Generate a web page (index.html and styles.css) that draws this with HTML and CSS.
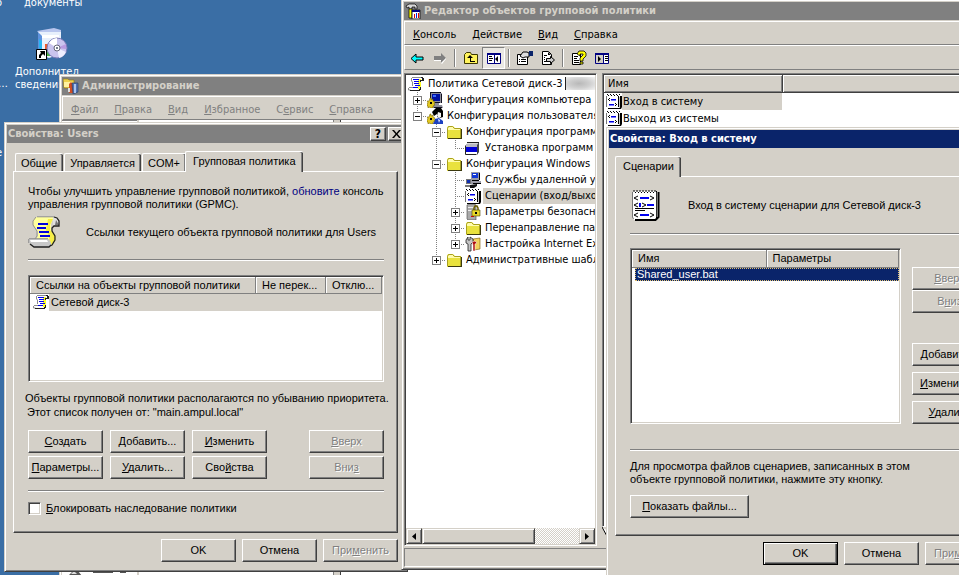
FILE: index.html
```html
<!DOCTYPE html>
<html lang="ru">
<head>
<meta charset="utf-8">
<title>Редактор объектов групповой политики</title>
<link rel="stylesheet" href="styles.css">
</head>
<body>
<svg class="defs" aria-hidden="true">
  <symbol id="i-scroll" viewBox="0 0 16 16">
    <path d="M4 1h10v3h-3l1 6-2 4H2l-1-3h3V9L3 5z" fill="#fff"/>
    <path d="M10 3h3v7l-1 3h-2V7z" fill="#ffff20"/>
    <path d="M4 1.500h9M3.500 2v3l1 1v4M1 11.500h8M.5 12v2h2" fill="none" stroke="#8c8c8c"/>
    <path d="M5 3h6v1H5zM6 5h5v1H6zM6 7h5v1H6zM7 9h5v1H7zM5 11h5v1H5z" fill="#0000f0"/>
    <path d="M13 1h2v1h1v3h-3v1h-1V4h2V2h-1zM2 14h9v-1h1v-2h1v3h-1v1H2z" fill="#202020"/>
  </symbol>
  <symbol id="i-scrollbig" viewBox="0 0 32 32">
    <path d="M8 1h18l-3 7v5l5 7v4l-4 6H8v-7l2-3v-4L5 9V4z" fill="#ffff9c"/>
    <path d="M20 3h5l-3 6v5l5 6v4l-3 4h-3v-8l-3-6 1-6z" fill="#f6ee48"/>
    <path d="M1 23h20l2 4v2l-2 2H5l-4-4z" fill="#c8c8c8"/><path d="M2 24h17l1 2H3z" fill="#fff"/>
    <path d="M25 1h4l2 3v5h-6z" fill="#e0e0e0"/><path d="M28 4l3 5h-4z" fill="#777"/>
    <path d="M9 .8h17M8 1L5 5v4l4 6v5l-2 3M.7 23v4M1 22.700h19" fill="none" stroke="#909090"/>
    <path d="M26 1l3 1 2 3v5h-5l-2 2v3l3 5v4l-3 5-2 1M2 28l4 3h15l2-2" fill="none" stroke="#202020" stroke-width="1.300"/>
    <path d="M10 7h10v2H10zM9 11h9v2H9zM11 15h10v2H11zM12 19h10v2H12z" fill="#0000e0"/>
  </symbol>
  <symbol id="i-folder" viewBox="0 0 16 16">
    <path d="M2 2h5l2 2h6v11H1V4z" fill="#e9e23e"/><path d="M2 3h5l1 2h6v1H2z" fill="#fffcae"/>
    <path d="M1.500 14V4.500l1-2h4l2 2h6V14" fill="none" stroke="#a8a020"/><path d="M2 14h13V5h1v10H2z" fill="#3c3a10"/>
  </symbol>
  <symbol id="i-script" viewBox="0 0 16 16">
    <path d="M1 2h12v12l-1 1H2l-1-1z" fill="#fff"/>
    <path d="M.5 3v11" stroke="#777"/><path d="M12 3h1v11h-1zM14 3h2v11l-1 2h-1zM2 15h12v1H2z" fill="#000"/><path d="M13 4h1v11h-1z" fill="#ccc"/>
    <path d="M1 1h1v1H1zM2 2h1v1H2zM4 1h1v1H4zM5 2h1v1H5zM7 1h1v1H7zM8 2h1v1H8zM10 1h1v1h-1zM11 2h1v1h-1zM13 1h1v1h-1zM3 5h1v1H3zM2 6h1v1H2zM3 7h1v1H3zM9 10h1v1H9zM10 11h1v1h-1zM9 12h1v1H9z" fill="#000"/>
    <path d="M5 6h5v1H5zM3 11h5v1H3z" fill="#0000e0"/><path d="M5 7h5v1H5zM3 12h5v1H3z" fill="#7a7aff"/>
  </symbol>
  <symbol id="i-scriptbig" viewBox="0 0 28 32">
    <path d="M1 2h23v27l-2 2H2l-1-2z" fill="#fff"/><path d="M.5 3v25l1 2" fill="none" stroke="#777"/>
    <path d="M26.500 3v25l-3 3H3" fill="none" stroke="#000" stroke-width="2"/><path d="M24.500 2v27" stroke="#000"/><path d="M25 3v25" stroke="#bbb" stroke-width=".5"/>
    <path d="M2 1v2M5 1v2M8 1v2M11 1v2M14 1v2M17 1v2M20 1v2M23 1v2M3.500 3v1M6.500 3v1M9.500 3v1M12.500 3v1M15.500 3v1M18.500 3v1M21.500 3v1" stroke="#000"/>
    <path d="M6 7L2 9l4 2M18 7l4 2-4 2M6 14l-4 2 4 2M10 14l4 2-4 2M6 24l-4 2 4 2M18 24l4 2-4 2M3 19.500h19M3 21.500h10" fill="none" stroke="#000"/>
    <path d="M8 9h9M15 16h7M8 26h9M8 14v4" stroke="#0000f0" stroke-width="2"/>
  </symbol>
  <symbol id="i-computer" viewBox="0 0 16 16">
    <path d="M3 0h11v1h1v10h-3v2h3l1 3H6V10H3z" fill="#8e8e9a"/><path d="M5 2h8v7H5z" fill="#0010a0"/><path d="M6 3h3v2H6z" fill="#3968ff"/>
    <path d="M3 0h11v1H4v9H3zM5 10h8v1H5zM14 2h1v9h-1zM7 15h8v1H7z" fill="#101020"/>
    <path d="M3 6h1v2l2-1v2l2 1-1 2 1 1-2 1v2H4l-1-1-2 1v-2H0v-2l1-1-1-2h2z" fill="#e2c822" stroke="#665600" stroke-width=".5"/><path d="M3 10h2v2H3z" fill="#000"/>
  </symbol>
  <symbol id="i-user" viewBox="0 0 16 16">
    <path d="M5 4l4-4h5l2 3v6l-3 1-3-1V6L7 8z" fill="#000"/><path d="M11 4l3 1v4l-2 1-2-2z" fill="#f4f4f4"/><path d="M8 11l4-1 4 3v3H6z" fill="#1a40c0"/><path d="M11 11l2 1-1 3z" fill="#fff"/>
    <path d="M3 6h1v2l2-1v2l2 1-1 2 1 1-2 1v2H4l-1-1-2 1v-2H0v-2l1-1-1-2h2z" fill="#e2c822" stroke="#665600" stroke-width=".5"/><path d="M3 10h2v2H3z" fill="#000"/>
  </symbol>
  <symbol id="i-soft" viewBox="0 0 16 16">
    <path d="M3 2h11v10l-2 2H1V5z" fill="#d8d8d8"/><path d="M1 4h11v3H1z" fill="#b8b8c0"/><path d="M1 7h11v5H1z" fill="#0000d8"/><path d="M1 12h11v2H1z" fill="#fff"/><path d="M12 5l2-3v10l-2 3z" fill="#404048"/><path d="M.5 5.500v9h11M2 2.500h12" fill="none" stroke="#222"/>
  </symbol>
  <symbol id="i-remote" viewBox="0 0 16 16">
    <path d="M6 0h9v8h-3v1h4v3H6z" fill="#9a9aa5"/><path d="M7 1h6v5H7z" fill="#1238d8"/><path d="M8 2h3v1H8z" fill="#fff"/><path d="M14 1h1v7h-1zM7 8h7v1H7zM8 11h8v1H8z" fill="#000"/>
    <path d="M1 7h5v5H1zM0 13h9v2H0z" fill="#777"/><path d="M2 8h3v3H2z" fill="#1030b0"/><path d="M5 13l7-1v2l-3 2H5z" fill="#111"/>
  </symbol>
  <symbol id="i-security" viewBox="0 0 16 16">
    <path d="M2 1l2-1h6l1 2v14H3l-1-1z" fill="#aaa" stroke="#444" stroke-width=".6"/><path d="M3 3h6v1H3zM3 6h6v1H3z" fill="#eee"/><path d="M6 12h3v1H6z" fill="#e00000"/>
    <path d="M9 7V4l1-2h2l1 2v3" fill="none" stroke="#6a5d00" stroke-width="1.500"/><path d="M7 6h8v6H7z" fill="#e8d82a" stroke="#4f4600" stroke-width=".6"/><path d="M10 8h2v2h-2z" fill="#000"/>
  </symbol>
  <symbol id="i-ie" viewBox="0 0 16 16">
    <path d="M8 3l7-1v11l-6 1z" fill="#f2d25e" stroke="#755500" stroke-width=".6"/><path d="M1 4l2-3v3h2V1l3 2v3L6 8v7H3V8L1 7z" fill="#c4c4c4" stroke="#222" stroke-width=".8"/><path d="M7 6l3-1 2 2-2 1v7H8V9z" fill="#b01010" stroke="#fff" stroke-width=".5"/>
  </symbol>
  <symbol id="i-gpedit" viewBox="0 0 16 16">
    <path d="M1 3l3-2h6l2 2v3h-2V4H7v2H4V4L2 5z" fill="#d8d8d8" stroke="#000" stroke-width=".7"/><path d="M4 6h3v9H4z" fill="#ff0" stroke="#000" stroke-width=".7"/>
    <path d="M7 7h8v9H7z" fill="#fff" stroke="#222"/><path d="M7 7h8v2H7z" fill="#000080"/><path d="M9 11h1v4H9zM13 10h1v5h-1z" fill="#e00000"/><path d="M11 10h1v5h-1z" fill="#0020e0"/>
  </symbol>
  <symbol id="i-tools" viewBox="0 0 16 16">
    <path d="M0 1h5l1 1h5v8H1z" fill="#eed34c" stroke="#8c7415" stroke-width=".6"/><path d="M1 4h8v5H1z" fill="#fff2a0"/><path d="M6 6l2-2 2 2v9H6z" fill="#d04c20"/><path d="M9 5h6v9l-5 2z" fill="#5272b0" stroke="#203a68" stroke-width=".6"/><path d="M11 6h2v9h-2z" fill="#a9c4ee"/><path d="M5 10h2v4H5z" fill="#ddd"/>
  </symbol>
  <symbol id="t-back" viewBox="0 0 16 16"><path d="M2 8.500L7 4v3h7v3H7v3z" fill="#0ff" stroke="#000"/></symbol>
  <symbol id="t-next" viewBox="0 0 16 16"><path d="M14 8L9 3v3H2v4h7v3z" fill="#808080"/><path d="M9 13l5-5v1l-4 5zM2 10h7v1H2z" fill="#fff"/></symbol>
  <symbol id="t-up" viewBox="0 0 16 16"><path d="M1.500 13.500v-9l2-2h4l1 2h6v9z" fill="#fff35c" stroke="#3c3800"/><path d="M7 5l3 3H8v3h4v1H7V8H4z" fill="#000"/></symbol>
  <symbol id="t-tree" viewBox="0 0 16 16"><path d="M1.500 3.500h13v10h-13z" fill="#fff" stroke="#000080"/><path d="M1 3h14v2H1zM8 5h1v9H8z" fill="#000080"/><path d="M3 6h3v1H3zM3 8h4v1H3zM3 10h3v1H3zM12 6v6l-3-3z" fill="#000"/></symbol>
  <symbol id="t-pane" viewBox="0 0 16 16"><path d="M1.500 3.500h13v10h-13z" fill="#fff" stroke="#000080"/><path d="M1 3h14v2H1zM9 5h1v9H9z" fill="#000080"/><path d="M2 5h7v8H2z" fill="#d4d0c8"/><path d="M11 6h3v1h-3zM11 8h3v1h-3zM11 10h3v1h-3zM4 6l3 3-3 3z" fill="#000"/></symbol>
  <symbol id="t-props" viewBox="0 0 16 16"><path d="M.5 4.500h10v10H.5z" fill="#fff" stroke="#000"/><path d="M2 9h1v1H2zM4 9h5v1H4zM2 11h1v1H2zM4 11h5v1H4z" fill="#000"/><path d="M3 6l3-4h4l2 1v4H8L6 8z" fill="#ddd" stroke="#000"/><path d="M12 1h4v5h-4z" fill="#0a246a"/></symbol>
  <symbol id="t-export" viewBox="0 0 16 16"><path d="M2.500 1.500h6l3 3v10h-9z" fill="#fff" stroke="#000"/><path d="M8 2v3h3M4 5h3v1H4zM4 7h1v1H4zM4 9h1v1H4zM4 11h5v1H4z" fill="#000"/><path d="M6.500 8.500h4v-2l4 3.500-4 3.500v-2h-4z" fill="#ccc" stroke="#000"/></symbol>
  <symbol id="t-help" viewBox="0 0 16 16"><path d="M1.500 3.500h8v11h-8z" fill="#fff" stroke="#000"/><path d="M3 6h4v1H3zM3 8h3v1H3zM3 10h5v1H3zM3 12h5v1H3z" fill="#000"/><path d="M6 4l2-3h5l2 2v3l-3 3v2H9V8l3-3V4H9v2z" fill="#ff0" stroke="#000" stroke-width=".8"/><path d="M9 12h3v2H9z" fill="#ff0" stroke="#000" stroke-width=".8"/></symbol>
</svg>

<main class="desktop">
  <div class="shortcut cut-top">документы</div>
  <span class="edge-top">о</span>
  <span class="edge-mid">…</span>
  <span class="edge-low">e</span>
  <div class="shortcut">
    <svg width="32" height="32" viewBox="0 0 32 32" aria-hidden="true">
      <path d="M1 3l17-3 7 2v5H5z" fill="#b9c6ee"/><path d="M2 4h23v22l-12 4-11-4z" fill="#e8f0fc"/><path d="M2 4l4 4v20l-4-2z" fill="#5e91dc"/><path d="M3 11l3 2v9l-3-2z" fill="#27b4f2"/><path d="M6 7h17v3H6z" fill="#fff"/><path d="M9 16h8v5H9z" fill="#ee5b2b"/><path d="M9 22h6v6H9z" fill="#4ab14a"/>
      <circle cx="21" cy="20" r="10" fill="#c9c4ee" stroke="#7b7cb8"/><path d="M21 20l-8-5a10 10 0 0 1 8-5z" fill="#fff"/><path d="M21 20l9 4a10 10 0 0 1-7 6z" fill="#eef"/><path d="M21 20l9-4v5z" fill="#b89ae0"/><circle cx="21" cy="20" r="3" fill="#fff" stroke="#667"/><circle cx="21" cy="20" r="1" fill="#456"/>
      <path d="M.5 21.500h10v10H.500z" fill="#fff" stroke="#000"/><path d="M4 23h5v5l-2-2-2 2v2H3v-3l2-2z" fill="#000"/>
    </svg>
    <span>Дополнител<br>сведения о…</span>
  </div>

  <section class="window admin" aria-label="Администрирование">
    <header class="title gray"><svg class="ico"><use href="#i-tools"/></svg>Администрирование</header>
    <nav class="menu off">
      <button><u>Ф</u>айл</button><button><u>П</u>равка</button><button><u>В</u>ид</button><button><u>И</u>збранное</button><button>С<u>е</u>рвис</button><button><u>С</u>правка</button>
    </nav>
    <div class="split"><div class="side">
      <svg width="70" height="6" viewBox="0 0 70 6" aria-hidden="true"><path d="M6 6l5-5h5l4 5zM31 1h20v2H31zM58 2h6v1h-6z" fill="#555"/><path d="M9 4l3-3 3 3z" fill="#ddd"/></svg>
    </div><div class="mid"></div><div class="main"></div></div>
  </section>

  <section class="window users" aria-label="Свойства: Users">
    <header class="title gray">Свойства: Users<span class="caps"><button aria-label="Справка">?</button><button aria-label="Закрыть"><svg width="9" height="8" viewBox="0 0 9 8"><path d="M0 0h2l2.500 3L7 0h2L5.500 4 9 8H7L4.500 5 2 8H0l3.500-4z"/></svg></button></span></header>
    <div class="body">
      <div class="tabs" role="tablist">
        <button role="tab">Общие</button><button role="tab">Управляется</button><button role="tab">COM+</button><button role="tab" class="on">Групповая политика</button>
      </div>
      <div class="page">
        <p class="intro">Чтобы улучшить управление групповой политикой, <a href="#">обновите</a> консоль управления групповой политики (GPMC).</p>
        <div class="lead"><svg width="32" height="32"><use href="#i-scrollbig"/></svg><span>Ссылки текущего объекта групповой политики для Users</span></div>
        <hr>
        <div class="list links">
          <table>
            <thead><tr><th>Ссылки на объекты групповой политики</th><th>Не перек...</th><th>Отклю...</th></tr></thead>
            <tbody><tr><td colspan="3"><div class="item"><svg class="ico"><use href="#i-scroll"/></svg><span>Сетевой диск-3</span></div></td></tr></tbody>
          </table>
        </div>
        <p class="note">Объекты групповой политики располагаются по убыванию приоритета.<br><span>Этот список получен от: "main.ampul.local"</span></p>
        <div class="grid">
          <button class="btn"><u>С</u>оздать</button><button class="btn"><u>Д</u>обавить...</button><button class="btn"><u>И</u>зменить</button><button class="btn last" disabled><u>В</u>верх</button>
          <button class="btn"><u>П</u>араметры...</button><button class="btn"><u>У</u>далить...</button><button class="btn">Сво<u>й</u>ства</button><button class="btn last" disabled>Вни<u>з</u></button>
        </div>
        <hr>
        <label class="check"><input type="checkbox"><span><u>Б</u>локировать наследование политики</span></label>
      </div>
      <footer class="actions"><button class="btn">OK</button><button class="btn">Отмена</button><button class="btn" disabled>При<u>м</u>енить</button></footer>
    </div>
  </section>

  <section class="window editor" aria-label="Редактор объектов групповой политики">
    <header class="title gray"><svg class="ico"><use href="#i-gpedit"/></svg>Редактор объектов групповой политики</header>
    <nav class="menu">
      <button><u>К</u>онсоль</button><button><u>Д</u>ействие</button><button><u>В</u>ид</button><button><u>С</u>правка</button>
    </nav>
    <div class="toolbar">
      <button aria-label="Назад"><svg class="ico"><use href="#t-back"/></svg></button><button aria-label="Вперед"><svg class="ico"><use href="#t-next"/></svg></button><i></i>
      <button aria-label="Вверх"><svg class="ico"><use href="#t-up"/></svg></button><button class="down" aria-label="Дерево"><svg class="ico"><use href="#t-tree"/></svg></button><i></i>
      <button aria-label="Свойства"><svg class="ico"><use href="#t-props"/></svg></button><button aria-label="Экспорт"><svg class="ico"><use href="#t-export"/></svg></button><i></i>
      <button aria-label="Справка"><svg class="ico"><use href="#t-help"/></svg></button><button aria-label="Панель"><svg class="ico"><use href="#t-pane"/></svg></button>
    </div>
    <div class="panes">
      <div class="tree-pane">
        <ul class="tree">
          <li><svg class="ico"><use href="#i-scroll"/></svg><span>Политика Сетевой диск-3</span><b class="smudge"></b></li>
          <li><i class="c v h"><b class="plus"></b></i><svg class="ico"><use href="#i-computer"/></svg><span>Конфигурация компьютера</span></li>
          <li><i class="c up h"><b></b></i><svg class="ico"><use href="#i-user"/></svg><span>Конфигурация пользователя</span></li>
          <li><i class="c"></i><i class="c v h"><b></b></i><svg class="ico"><use href="#i-folder"/></svg><span>Конфигурация программ</span></li>
          <li><i class="c"></i><i class="c v"></i><i class="c up h"></i><svg class="ico"><use href="#i-soft"/></svg><span>Установка программ</span></li>
          <li><i class="c"></i><i class="c v h"><b></b></i><svg class="ico"><use href="#i-folder"/></svg><span>Конфигурация Windows</span></li>
          <li><i class="c"></i><i class="c v"></i><i class="c v h"></i><svg class="ico"><use href="#i-remote"/></svg><span>Службы удаленной установки</span></li>
          <li><i class="c"></i><i class="c v"></i><i class="c v h"></i><svg class="ico"><use href="#i-script"/></svg><span class="sel">Сценарии (вход/выход из системы)</span></li>
          <li><i class="c"></i><i class="c v"></i><i class="c v h"><b class="plus"></b></i><svg class="ico"><use href="#i-security"/></svg><span>Параметры безопасности</span></li>
          <li><i class="c"></i><i class="c v"></i><i class="c v h"><b class="plus"></b></i><svg class="ico"><use href="#i-folder"/></svg><span>Перенаправление папки</span></li>
          <li><i class="c"></i><i class="c v"></i><i class="c up h"><b class="plus"></b></i><svg class="ico"><use href="#i-ie"/></svg><span>Настройка Internet Explorer</span></li>
          <li><i class="c"></i><i class="c up h"><b class="plus"></b></i><svg class="ico"><use href="#i-folder"/></svg><span>Административные шаблоны</span></li>
        </ul>
        <div class="scroll"><button aria-label="Влево"><svg width="4" height="7"><path d="M4 0v7L0 3.500z"/></svg></button><div class="thumb"></div><div class="track"></div><button aria-label="Вправо"><svg width="4" height="7"><path d="M0 0v7l4-3.500z"/></svg></button></div>
      </div>
      <div class="right-pane">
        <div class="files">
          <table>
            <thead><tr><th>Имя</th><th></th></tr></thead>
            <tbody>
              <tr><td><div class="item"><svg class="ico"><use href="#i-script"/></svg><span>Вход в систему</span></div></td><td></td></tr>
              <tr><td><div class="item plain"><svg class="ico"><use href="#i-script"/></svg><span>Выход из системы</span></div></td><td></td></tr>
            </tbody>
          </table>
        </div>
        <svg class="view-tab" width="16" height="12" viewBox="0 0 16 12" aria-hidden="true"><path d="M0 0l6 11h10" fill="#fff" stroke="#000"/></svg>
      </div>
    </div>
    <div class="status"></div>
  </section>

  <section class="window logon" aria-label="Свойства: Вход в систему">
    <header class="title">Свойства: Вход в систему</header>
    <div class="body">
      <div class="tabs" role="tablist"><button role="tab" class="on">Сценарии</button></div>
      <div class="page">
        <div class="lead"><svg width="28" height="32"><use href="#i-scriptbig"/></svg><span>Вход в систему сценарии для Сетевой диск-3</span></div>
        <hr>
        <div class="cols">
          <div class="list scripts">
            <table>
              <thead><tr><th>Имя</th><th>Параметры</th></tr></thead>
              <tbody><tr><td colspan="2"><div class="picked">Shared_user.bat</div></td></tr></tbody>
            </table>
          </div>
          <div class="stack">
            <button class="btn" disabled><u>В</u>верх</button><button class="btn" disabled>В<u>н</u>из</button>
            <button class="btn add"><u>Д</u>обавить...</button><button class="btn"><u>И</u>зменить...</button><button class="btn"><u>У</u>далить</button>
          </div>
        </div>
        <hr>
        <p class="hint">Для просмотра файлов сценариев, записанных в этом<br>объекте групповой политики, нажмите эту кнопку.</p>
        <button class="btn show"><u>П</u>оказать файлы...</button>
      </div>
      <footer class="actions"><button class="btn default">OK</button><button class="btn">Отмена</button><button class="btn" disabled>При<u>м</u>енить</button></footer>
    </div>
  </section>
</main>
</body>
</html>
```
FILE: styles.css
```css
:root {
  --face: #d4d0c8;
  --shade: #808080;
  --dark: #404040;
  --ui: "Liberation Sans", Arial, sans-serif;
  --shell: "DejaVu Sans Condensed", "DejaVu Sans", sans-serif;
}
* { box-sizing: border-box; }
body { margin: 0; color: #000; font: 11px/13px var(--ui); }
button { font: inherit; color: inherit; padding: 0; margin: 0; border: 0; background: none; white-space: nowrap; }
p, ul { margin: 0; padding: 0; list-style: none; }
table { border-collapse: collapse; table-layout: fixed; width: 100%; }
th { font-weight: normal; text-align: left; white-space: nowrap; }
td { padding: 0; white-space: nowrap; }
hr { margin: 0; border: 0; border-top: 1px solid var(--shade); border-bottom: 1px solid #fff; }
u { text-underline-offset: 1px; }
.defs { display: none; }
.ico { width: 16px; height: 16px; flex: none; }

.desktop { position: relative; height: 100vh; overflow: hidden; background: #3a6ea5; }
.shortcut { position: absolute; left: 15px; top: 28px; width: 72px; color: #fff; font: 11px/13px var(--shell); white-space: nowrap; }
.shortcut svg { display: block; margin: 0 auto 5px 21px; }
.shortcut.cut-top { left: 24px; top: -4px; }
.edge-top, .edge-mid, .edge-low { position: absolute; left: -4px; top: -4px; color: #fff; font: 11px/13px var(--shell); }
.edge-mid { left: -2px; top: 77px; }
.edge-low { top: 146px; }

.window { position: absolute; display: flex; flex-direction: column; padding: 2px; background: var(--face); border: 1px solid; border-color: var(--face) var(--dark) var(--dark) var(--face); box-shadow: inset 1px 1px #fff, inset -1px -1px var(--shade); }
.title { display: flex; align-items: center; flex: none; height: 18px; padding: 0 1px; gap: 3px; background: #0a246a; color: #fff; font: bold 11px/18px var(--shell); white-space: nowrap; }
.title.gray { background: var(--shade); color: var(--face); }
.caps { display: flex; gap: 2px; margin-left: auto; }
.caps button { display: grid; place-items: center; width: 16px; height: 14px; color: #000; font: bold 12px/12px var(--shell); background: var(--face); border: 1px solid; border-color: #fff var(--dark) var(--dark) #fff; box-shadow: inset -1px -1px var(--shade); }
.menu { display: flex; align-items: center; flex: none; height: 24px; margin-top: 1px; padding: 3px 0 0; border: 1px solid; border-color: #fff var(--shade) var(--shade) #fff; font: 11px/14px var(--shell); }
.menu button { padding: 0 8px; }
.menu.off { color: var(--shade); }

.admin { left: 59px; top: 74px; width: 580px; bottom: -40px; }
.split { display: flex; gap: 2px; flex: 1; }
.side { display: flex; align-items: flex-end; width: 75px; padding-bottom: 36px; background: #fff; border-top: 1px solid var(--shade); }
.mid { width: 195px; margin-right: 4px; background: #fff; border-right: 1px solid var(--shade); }
.main { flex: 1; background: #fff; border-left: 1px solid var(--dark); }

.users { left: 4px; top: 122px; width: 404px; }
.body { padding: 8px 7px 7px 6px; }
.tabs { display: flex; align-items: flex-end; height: 21px; padding-left: 2px; position: relative; margin-bottom: -1px; }
.tabs button { height: 18px; margin: 0 1px 1px 0; padding: 2px 6px 0 5px; border: solid #fff; border-width: 1px 0 0 1px; border-radius: 2px 2px 0 0; box-shadow: inset -1px 0 var(--dark), inset -2px 0 var(--shade); }
.tabs .on { height: 21px; margin: 0 0 0 -2px; padding: 0 7px 2px; background: var(--face); }
.page { padding: 13px 13px 17px 14px; border: 1px solid; border-color: #fff var(--dark) var(--dark) #fff; box-shadow: inset -1px -1px var(--shade); }
.intro { margin-right: -1px; }
.intro a { color: #000080; text-decoration: none; }
.lead { display: flex; align-items: center; gap: 26px; }
.users .lead { margin: 5px 0 11px; }
.list { background: #fff; border: 1px solid; border-color: var(--shade) #fff #fff var(--shade); box-shadow: inset 1px 1px var(--dark), inset -1px -1px var(--face); padding: 1px; }
.list th { height: 16px; padding: 1px 6px 0; background: var(--face); border-right: 1px solid var(--shade); border-bottom: 1px solid var(--shade); box-shadow: inset 1px 1px #fff; }
.links { height: 107px; margin: 14px 0 9px; }
.links th:nth-child(2) { width: 70px; }
.links th:nth-child(3) { width: 56px; }
.item { display: flex; height: 17px; line-height: 17px; }
.item span { flex: 1; padding-left: 2px; background: var(--face); }
.item.plain span { background: none; }
.links .item { padding-left: 3px; }
.note { margin: 0 -8px 11px -3px; line-height: 14px; white-space: nowrap; }
.note span { padding-left: 2px; }
.grid { display: grid; grid-template-columns: repeat(4, 75px); gap: 3px 7px; margin-bottom: 11px; }
.grid .last { margin-left: 35px; }
.btn { display: block; width: 75px; height: 23px; text-align: center; border: 1px solid; border-color: #fff var(--dark) var(--dark) #fff; box-shadow: inset -1px -1px var(--shade); }
.btn:disabled { color: var(--shade); text-shadow: 1px 1px #fff; }
.btn.default { border-color: #000; box-shadow: inset 1px 1px #fff, inset -1px -1px var(--dark), inset -2px -2px var(--shade); }
.check { display: flex; align-items: center; gap: 5px; margin-top: 10px; }
.check input { appearance: none; width: 13px; height: 13px; margin: 0; background: #fff; border: 1px solid; border-color: var(--shade) #fff #fff var(--shade); box-shadow: inset 1px 1px var(--dark), inset -1px -1px var(--face); }
.actions { display: flex; justify-content: flex-end; gap: 6px; padding-top: 6px; }

.editor { left: 401px; top: -1px; right: -10px; height: 571px; }
.toolbar { display: flex; align-items: center; flex: none; height: 25px; border: 1px solid; border-color: #fff var(--shade) var(--shade) #fff; }
.toolbar button { display: grid; place-items: center; width: 23px; height: 22px; }
.toolbar .down { border: 1px solid; border-color: var(--shade) #fff #fff var(--shade); background: #eae8e3; }
.toolbar i { width: 2px; height: 18px; margin: 0 3px; border-left: 1px solid var(--shade); border-right: 1px solid #fff; }
.panes { display: flex; flex: 1; min-height: 0; gap: 5px; margin-top: 3px; font: 11px/16px var(--shell); }
.tree-pane { display: flex; flex-direction: column; justify-content: space-between; width: 193px; overflow: hidden; padding: 1px; background: #fff; border: 1px solid; border-color: var(--shade) #fff #fff var(--shade); box-shadow: inset 1px 1px var(--dark), inset -1px -1px var(--face); }
.tree { overflow: hidden; padding: 1px 0 0 2px; }
.tree li { display: flex; height: 16px; white-space: nowrap; }
.tree span { padding: 0 2px; margin-left: 2px; }
.tree .sel { background: var(--face); }
.c { display: grid; place-items: center; flex: none; width: 19px; height: 16px; background-repeat: no-repeat; --dots: repeating-linear-gradient(#808080 0 1px, transparent 1px 2px); --across: repeating-linear-gradient(90deg, #808080 0 1px, transparent 1px 2px); }
.c.v { background-image: var(--dots); background-size: 1px 100%; background-position: 9px 0; }
.c.up.h { background-image: var(--dots), var(--across); background-size: 1px 8px, 10px 1px; background-position: 9px 0, 9px 8px; }
.c.v.h { background-image: var(--dots), var(--across); background-size: 1px 100%, 10px 1px; background-position: 9px 0, 9px 8px; }
.c b { width: 9px; height: 9px; border: 1px solid var(--shade); background: linear-gradient(#000, #000) center / 5px 1px no-repeat #fff; }
.c .plus { background: linear-gradient(#000, #000) center / 5px 1px no-repeat, linear-gradient(#000, #000) center / 1px 5px no-repeat #fff; }
.smudge { width: 30px; height: 13px; margin-top: 1px; border-left: 1px solid #222; background: radial-gradient(ellipse at 45% 50%, #b8b8b8, #d0d0d0 50%, #f4f4f4); }
.scroll { display: flex; flex: none; height: 16px; }
.scroll button, .thumb { display: grid; place-items: center; width: 16px; background: var(--face); border: 1px solid; border-color: var(--face) var(--dark) var(--dark) var(--face); box-shadow: inset 1px 1px #fff, inset -1px -1px var(--shade); }
.thumb { flex: 5; }
.track { flex: 2; background: repeating-conic-gradient(#fff 0 25%, var(--face) 0 50%) 0 0 / 2px 2px; }
.right-pane { flex: 1; display: flex; flex-direction: column; }
.files { flex: 1; padding: 1px; background: #fff; border: 1px solid; border-color: var(--shade) #fff #fff var(--shade); box-shadow: inset 1px 1px var(--dark); }
.files th { height: 17px; padding: 1px 4px 0; background: var(--face); border-right: 1px solid var(--dark); border-bottom: 1px solid var(--dark); box-shadow: inset 1px 1px #fff, inset -1px -1px var(--shade); }
.files th:first-child { width: 178px; }
.files td { height: 17px; }
.files .item { padding-left: 2px; }
.files .item span { padding-left: 1px; }
.view-tab { display: block; margin: 0 0 7px; }
.status { flex: none; height: 19px; margin-top: 2px; border: 1px solid; border-color: var(--shade) #fff #fff var(--shade); }

.logon { left: 606px; top: 127px; width: 404px; }
.logon .body { padding: 8px 7px 9px 6px; }
.logon .tabs { padding-left: 0; }
.logon .tabs .on { margin-left: 0; padding: 0 7px 2px; }
.logon .page { padding: 12px 12px 17px 14px; }
.logon .lead { margin: 0 0 12px 2px; gap: 28px; }
.cols { display: flex; justify-content: space-between; gap: 11px; margin: 13px 0 25px; }
.scripts { flex: 1; height: 176px; }
.scripts th { height: 17px; }
.scripts th:first-child { width: 134px; }
.scripts td { padding: 0 0 0 3px; }
.picked { padding: 0 2px; color: #fff; background: #0a246a; outline: 1px dotted #e0c070; outline-offset: -1px; }
.stack { display: flex; flex-direction: column; gap: 6px; padding-top: 19px; }
.stack .btn:nth-child(2) { margin-top: -6px; }
.stack .add { margin-top: 24px; }
.hint { margin: 9px 0; }
.btn.show { width: 119px; }
```
